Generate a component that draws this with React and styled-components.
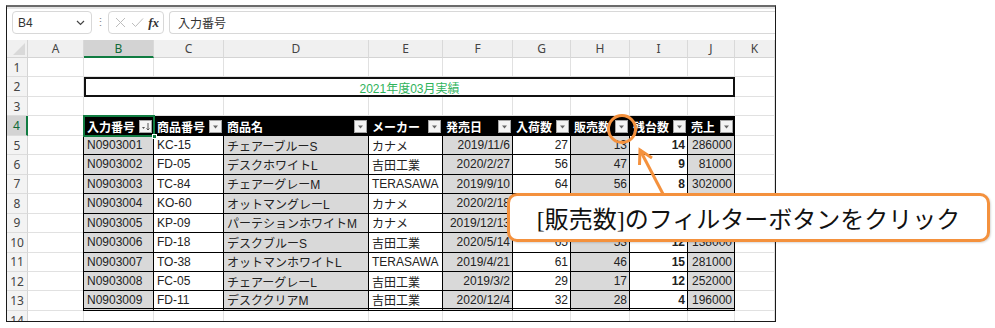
import React from 'react';
import styled, { createGlobalStyle } from 'styled-components';

const GlobalStyle = createGlobalStyle`
    body {
        margin:0;
        background:#fff;
        font-family:"Liberation Sans","Noto Sans CJK JP",sans-serif;
    }
`;

const Page = styled.div`
    position:relative;
    width:995px;
    height:328px;
    padding:5px 0 0 6px;
    box-sizing:border-box;
    overflow:hidden;
`;

const Frame = styled.div`
    width:770px;
    height:317px;
    box-sizing:border-box;
    border:1px solid #1a1a1a;
    border-top:2px solid #6b6b6b;
    display:flex;
    flex-direction:column;
    overflow:hidden;
`;

const Toolbar = styled.div`
    height:33px;
    flex-shrink:0;
    box-sizing:border-box;
    border-top:2px solid #e4e4e4;
    padding:2px 0 0 5px;
    display:flex;
    align-items:flex-start;
    background:#fff;
`;

const NameBox = styled.div`
    width:80px;
    height:23px;
    box-sizing:border-box;
    border:1px solid #d8d8d8;
    border-radius:4px;
    display:flex;
    align-items:center;
    justify-content:space-between;
    padding:0 6px 0 5px;
    font-size:12px;
    color:#333;
`;

const Dots = styled.div`
    width:16px;
    height:23px;
    display:flex;
    align-items:center;
    justify-content:center;
    color:#888;
    font-size:11px;
`;

const FxBox = styled.div`
    width:56px;
    height:23px;
    box-sizing:border-box;
    border:1px solid #d8d8d8;
    border-radius:4px;
    display:flex;
    align-items:center;
    justify-content:space-between;
    padding:0 4px 0 6px;
`;

const Fx = styled.span`
    font-family:"Liberation Serif",serif;
    font-style:italic;
    font-weight:bold;
    font-size:13px;
    color:#333;
`;

const FormulaInput = styled.div`
    flex:1;
    height:23px;
    margin-left:5px;
    box-sizing:border-box;
    border:1px solid #d8d8d8;
    border-right:none;
    border-radius:4px 0 0 4px;
    display:flex;
    align-items:center;
    padding-left:8px;
    font-family:"Noto Sans CJK JP",sans-serif;
    font-size:12px;
    color:#333;
`;

const Sheet = styled.div`
    flex:1;
    min-height:0;
    overflow:hidden;
    display:grid;
    grid-template-columns:21px 56px 70px 70px 145px 74px 70px 58px 59px 58px 47px 1fr;
    grid-template-rows:18px repeat(13, 19.46px) 20px;
    font-size:12px;
`;

const Corner = styled.div`
    background:#f0f0f0;
    border-right:1px solid #d4d4d4;
    border-bottom:1px solid #d4d4d4;
    position:relative;
    &::after {
        content:'';
        position:absolute;
        right:2px;
        bottom:2px;
        border-left:12px solid transparent;
        border-bottom:12px solid #d9d9d9;
    }
`;

const ColHead = styled.div`
    background:${p => (p.$active ? '#d3d3d3' : '#f0f0f0')};
    border-right:1px solid #d9d9d9;
    border-bottom:${p => (p.$active ? '2px solid #107c41' : '1px solid #d4d4d4')};
    display:flex;
    align-items:center;
    justify-content:center;
    font-family:"Noto Sans",sans-serif;
    font-size:12px;
    color:${p => (p.$active ? '#0f6a37' : '#444')};
`;

const RowHead = styled.div`
    background:${p => (p.$active ? '#d3d3d3' : '#f3f3f3')};
    border-right:${p => (p.$active ? '2px solid #107c41' : '1px solid #d4d4d4')};
    border-bottom:1px solid #dcdcdc;
    display:flex;
    align-items:center;
    justify-content:center;
    font-family:"Noto Sans",sans-serif;
    font-size:12px;
    color:${p => (p.$active ? '#0f6a37' : '#444')};
    overflow:hidden;
`;

const Cell = styled.div`
    position:relative;
    background:${p => p.$bg || '#fff'};
    border-right:1px solid ${p => p.$line || '#e1e1e1'};
    border-bottom:${p => (p.$double ? '3px double #000' : `1px solid ${p.$line || '#e1e1e1'}`)};
    box-shadow:${p => (p.$edge ? '-1px 0 0 #000' : 'none')};
    display:flex;
    align-items:center;
    justify-content:${p => (p.$align === 'right' ? 'flex-end' : 'flex-start')};
    padding:0 2px 0 3px;
    min-width:0;
    overflow:hidden;
    white-space:nowrap;
    font-weight:${p => (p.$bold ? 'bold' : 'normal')};
    color:#222;
`;

const Title = styled.div`
    grid-column:span 9;
    border:2px solid #111;
    display:flex;
    align-items:center;
    justify-content:center;
    color:#2eb35a;
    font-size:12px;
    background:#fff;
`;

const HeadCell = styled.div`
    position:relative;
    background:#000;
    color:#fff;
    font-weight:bold;
    display:flex;
    align-items:center;
    justify-content:space-between;
    padding:0 2px 0 3px;
    white-space:nowrap;
    outline:${p => (p.$selected ? '2px solid #107c41' : 'none')};
    outline-offset:-1px;
    z-index:${p => (p.$selected ? 1 : 0)};
    box-shadow:${p => (p.$edge ? '-1px 0 0 #000' : 'none')};
`;

const Handle = styled.span`
    position:absolute;
    right:-3px;
    bottom:-3px;
    width:5px;
    height:5px;
    background:#107c41;
    border:1px solid #fff;
    box-sizing:border-box;
`;

const FilterButton = styled.span`
    width:13px;
    height:13px;
    box-sizing:border-box;
    background:#f4f4f4;
    border:1px solid #a6a6a6;
    display:flex;
    align-items:center;
    justify-content:center;
    flex-shrink:0;
`;

const Callout = styled.div`
    position:absolute;
    left:507px;
    top:193px;
    width:483px;
    height:49px;
    box-sizing:border-box;
    border:3px solid #f4913d;
    border-radius:10px;
    background:#fff;
    display:flex;
    align-items:center;
    justify-content:center;
    font-family:"Liberation Serif","Noto Sans CJK JP",serif;
    font-size:24px;
    color:#111;
    box-shadow:1px 1px 2px rgba(0,0,0,0.15);
`;

const Overlay = styled.svg`
    position:absolute;
    left:0;
    top:0;
    pointer-events:none;
`;

const cols = ['A', 'B', 'C', 'D', 'E', 'F', 'G', 'H', 'I', 'J', 'K'];

const headers = ['入力番号', '商品番号', '商品名', 'メーカー', '発売日', '入荷数', '販売数', '残台数', '売上'];

const data = [
    ['N0903001', 'KC-15', 'チェアーブルーS', 'カナメ', '2019/11/6', 27, 13, 14, 286000],
    ['N0903002', 'FD-05', 'デスクホワイトL', '吉田工業', '2020/2/27', 56, 47, 9, 81000],
    ['N0903003', 'TC-84', 'チェアーグレーM', 'TERASAWA', '2019/9/10', 64, 56, 8, 302000],
    ['N0903004', 'KO-60', 'オットマングレーL', 'カナメ', '2020/2/18', 42, 37, 5, 95000],
    ['N0903005', 'KP-09', 'パーテションホワイトM', 'カナメ', '2019/12/13', 38, 30, 8, 164000],
    ['N0903006', 'FD-18', 'デスクブルーS', '吉田工業', '2020/5/14', 65, 53, 12, 138000],
    ['N0903007', 'TO-38', 'オットマンホワイトL', 'TERASAWA', '2019/4/21', 61, 46, 15, 281000],
    ['N0903008', 'FC-05', 'チェアーグレーL', '吉田工業', '2019/3/2', 29, 17, 12, 252000],
    ['N0903009', 'FD-11', 'デスククリアM', '吉田工業', '2020/12/4', 32, 28, 4, 196000],
];

const colStyle = [
    { bg: '#d9d9d9' },
    { bg: '#fff' },
    { bg: '#d9d9d9' },
    { bg: '#fff' },
    { bg: '#d9d9d9', align: 'right' },
    { bg: '#fff', align: 'right' },
    { bg: '#d9d9d9', align: 'right' },
    { bg: '#fff', align: 'right', bold: true },
    { bg: '#d9d9d9', align: 'right' },
];

const Arrow = ({ sort }) => (
    <svg width="9" height="9" viewBox="0 0 9 9">
        {sort ? (
            <g>
                <path d="M1 5 L4 5 L2.5 7 Z" fill="#555" />
                <path d="M7 1 V8 M5.5 6.5 L7 8 L8.5 6.5" stroke="#555" strokeWidth="1" fill="none" />
            </g>
        ) : (
            <path d="M2 3.5 L7 3.5 L4.5 6.5 Z" fill="#666" />
        )}
    </svg>
);

class App extends React.Component {
    renderRow(r) {
        const cells = [];
        cells.push(<RowHead $active={r === 4}>{r}</RowHead>);
        if (r === 2) {
            cells.push(<Cell />);
            cells.push(<Title>2021年度03月実績</Title>);
            cells.push(<Cell />);
        } else if (r === 4) {
            cells.push(<Cell />);
            headers.forEach((h, i) => {
                cells.push(
                    <HeadCell $selected={i === 0} $edge={i === 0}>
                        <span>{h}</span>
                        <FilterButton><Arrow sort={i === 0} /></FilterButton>
                        {i === 0 && <Handle />}
                    </HeadCell>
                );
            });
            cells.push(<Cell />);
        } else if (r >= 5 && r <= 13) {
            cells.push(<Cell />);
            data[r - 5].forEach((v, i) => {
                const s = colStyle[i];
                cells.push(
                    <Cell
                        $bg={s.bg}
                        $align={s.align}
                        $bold={s.bold}
                        $line="#000"
                        $edge={i === 0}
                        $double={r === 13}
                    >
                        {v}
                    </Cell>
                );
            });
            cells.push(<Cell />);
        } else {
            for (let i = 0; i < 11; i++) cells.push(<Cell />);
        }
        return cells;
    }

    render() {
        const rows = [];
        for (let r = 1; r <= 14; r++) {
            this.renderRow(r).forEach((c, i) => rows.push(React.cloneElement(c, { key: `${r}-${i}` })));
        }

        return (
            <Page>
                <GlobalStyle />
                <Frame>
                    <Toolbar>
                        <NameBox>
                            <span>B4</span>
                            <svg width="9" height="6" viewBox="0 0 9 6">
                                <path d="M1 1 L4.5 4.5 L8 1" stroke="#444" strokeWidth="1.2" fill="none" />
                            </svg>
                        </NameBox>
                        <Dots>⋮</Dots>
                        <FxBox>
                            <svg width="11" height="11" viewBox="0 0 11 11">
                                <path d="M1 1 L10 10 M10 1 L1 10" stroke="#bdbdbd" strokeWidth="1" />
                            </svg>
                            <svg width="13" height="11" viewBox="0 0 13 11">
                                <path d="M1 6 L4.5 9.5 L12 1.5" stroke="#bdbdbd" strokeWidth="1" fill="none" />
                            </svg>
                            <Fx>fx</Fx>
                        </FxBox>
                        <FormulaInput>入力番号</FormulaInput>
                    </Toolbar>
                    <Sheet>
                        <Corner />
                        {cols.map(c => (
                            <ColHead key={c} $active={c === 'B'}>{c}</ColHead>
                        ))}
                        {rows}
                    </Sheet>
                </Frame>

                <Overlay width="995" height="328">
                    <circle cx="622" cy="129" r="13.5" stroke="#f4913d" strokeWidth="3" fill="none" />
                    <path d="M663 194 L640 150" stroke="#f4913d" strokeWidth="3" fill="none" />
                    <path d="M639.5 165 L640 150 L652 158" stroke="#f4913d" strokeWidth="3" fill="none" />
                </Overlay>
                <Callout>[販売数]のフィルターボタンをクリック</Callout>
            </Page>
        );
    }
}

export default App;
